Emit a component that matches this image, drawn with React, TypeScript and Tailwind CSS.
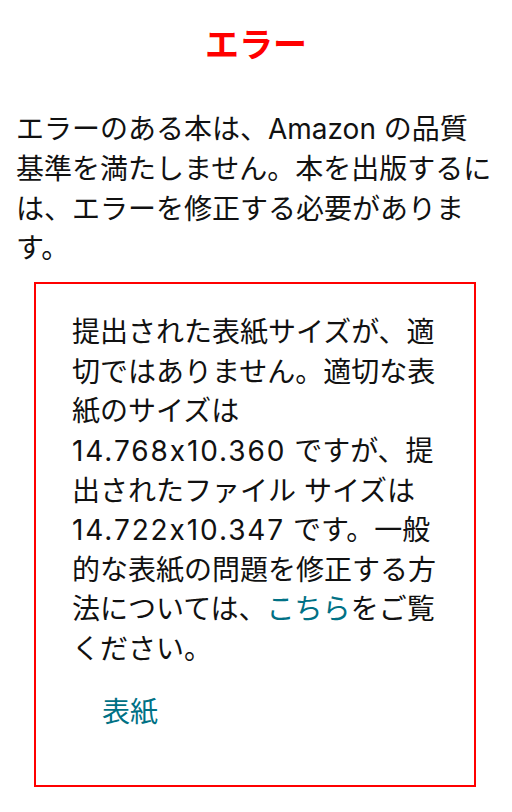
function Num({ children }: { children: string }) {
  return <span className="tracking-[1.9px]">{children}</span>;
}

export default function App() {
  const font = { fontFamily: 'Inter, "Noto Sans CJK JP", sans-serif' };
  return (
    <div
      className="min-h-[812px] bg-white px-4 text-[#111111] [font-feature-settings:'calt'_0]"
      style={font}
    >
      <h1 className="pt-[21px] text-center text-[34px] font-bold leading-[48px] text-[#ff0000]">
        エラー
      </h1>
      <p className="mt-[41px] text-[28px] leading-[39.8px]">
        <span className="block whitespace-nowrap">エラーのある本は、Amazon の品質</span>
        <span className="block whitespace-nowrap">基準を満たしません。本を出版するに</span>
        <span className="block whitespace-nowrap">は、エラーを修正する必要がありま</span>
        <span className="block whitespace-nowrap">す。</span>
      </p>
      <div className="mb-[26px] ml-[18px] mr-[20px] mt-[13px] border-2 border-[#ff0000] pb-[53px] pt-[29px]">
        <p className="pl-[36px] pr-[20px] text-[28px] leading-[39.6px]">
          <span className="block whitespace-nowrap">提出された表紙サイズが、適</span>
          <span className="block whitespace-nowrap">切ではありません。適切な表</span>
          <span className="block whitespace-nowrap">紙のサイズは</span>
          <span className="block whitespace-nowrap">
            <Num>14.768x10.360</Num> ですが、提
          </span>
          <span className="block whitespace-nowrap">出されたファイル サイズは</span>
          <span className="block whitespace-nowrap">
            <Num>14.722x10.347</Num> です。一般
          </span>
          <span className="block whitespace-nowrap">的な表紙の問題を修正する方</span>
          <span className="block whitespace-nowrap">
            法については、<a className="text-[#007185]">こちら</a>をご覧
          </span>
          <span className="block whitespace-nowrap">ください。</span>
        </p>
        <div className="mt-[23px] pl-[66px] text-[28px] leading-[39.6px]">
          <a className="text-[#007185]">表紙</a>
        </div>
      </div>
    </div>
  );
}
